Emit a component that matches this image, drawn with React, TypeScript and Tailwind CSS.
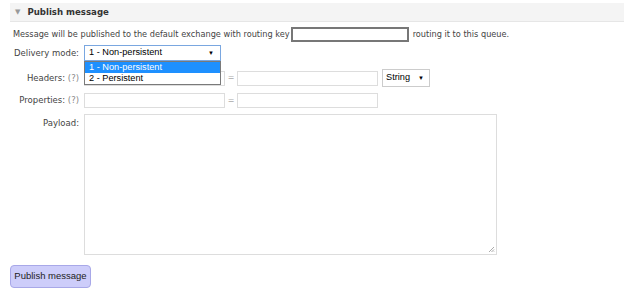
import React from "react";

const verdana = { fontFamily: '"DejaVu Sans", Verdana, sans-serif' };
const arial = { fontFamily: '"Liberation Sans", Arial, sans-serif' };

function Label({ children, help }: { children: React.ReactNode; help?: boolean }) {
  return (
    <div className="w-[69px] shrink-0 text-right text-[8.5px] text-[#444] whitespace-nowrap" style={verdana}>
      {children}
      {help && <span className="text-[#888]"> (?)</span>}
    </div>
  );
}

function TextBox({ w }: { w: number }) {
  return <div className="h-[15px] border border-[#ddd] bg-white shrink-0" style={{ width: w }} />;
}

export default function App() {
  return (
    <div className="w-[624px] h-[289px] bg-white overflow-hidden pl-[10px] pt-[3px]" style={verdana}>
      <div className="h-[19px] bg-[#f4f4f4] border-b border-[#e6e6e6] flex items-center pl-[5px]">
        <span className="text-[7px] text-[#999] leading-none">▼</span>
        <span className="ml-[7px] text-[8.6px] font-bold text-[#333] whitespace-nowrap">Publish message</span>
      </div>
      <div className="flex items-center mt-[5px] pl-[3px] text-[8.2px] text-[#444] h-[15px] whitespace-nowrap">
        <span>Message will be published to the default exchange with routing key</span>
        <div className="w-[118px] h-[15px] border-2 border-[#777] bg-white ml-[1px] mr-[4px] shrink-0" />
        <span>routing it to this queue.</span>
      </div>
      <div className="relative flex items-center mt-[3px] h-[16px]">
        <Label>Delivery mode:</Label>
        <div className="relative ml-[5px]">
          <div
            className="w-[137px] h-[16px] border border-[#7aa7e0] bg-white flex items-center justify-between pl-[4px] pr-[6px] text-[9.2px] text-black whitespace-nowrap"
            style={arial}
          >
            <span>1 - Non-persistent</span>
            <span className="text-[6px]">▼</span>
          </div>
          <div
            className="absolute left-0 top-[16px] z-10 w-[137px] border border-[#7a7a7a] bg-white text-[9.2px] text-black whitespace-nowrap"
            style={arial}
          >
            <div className="h-[11px] leading-[11px] bg-[#1e90ff] text-white pl-[4px]">1 - Non-persistent</div>
            <div className="h-[11px] leading-[11px] pl-[4px]">2 - Persistent</div>
          </div>
        </div>
      </div>
      <div className="flex items-center mt-[8px] h-[18px]">
        <Label help>Headers:</Label>
        <div className="ml-[5px] flex items-center">
          <TextBox w={141} />
          <span className="text-[8px] text-[#aaa] w-[12px] text-center">=</span>
          <TextBox w={141} />
          <div
            className="ml-[4px] w-[48px] h-[18px] border border-[#ccc] bg-white flex items-center justify-between pl-[3px] pr-[5px] text-[9.2px] text-black"
            style={arial}
          >
            <span>String</span>
            <span className="text-[6px]">▼</span>
          </div>
        </div>
      </div>
      <div className="flex items-center mt-[6px] h-[15px]">
        <Label help>Properties:</Label>
        <div className="ml-[5px] flex items-center">
          <TextBox w={141} />
          <span className="text-[8px] text-[#aaa] w-[12px] text-center">=</span>
          <TextBox w={141} />
        </div>
      </div>
      <div className="flex items-start mt-[6px]">
        <div className="pt-[3px]">
          <Label>Payload:</Label>
        </div>
        <div className="relative ml-[5px] w-[413px] h-[141px] border border-[#ddd] bg-white">
          <svg className="absolute right-[1px] bottom-[1px]" width="7" height="7" viewBox="0 0 7 7">
            <path d="M6 1 L1 6 M6 3.5 L3.5 6 M6 5.5 L5.5 6" stroke="#aaa" strokeWidth="1" />
          </svg>
        </div>
      </div>
      <div className="mt-[10px]">
        <button
          className="w-[81px] h-[23px] rounded-[4px] border border-[#a8a8e8] bg-[#cdcdfa] text-[9.5px] text-[#222] flex items-center justify-center whitespace-nowrap"
          style={arial}
        >
          Publish message
        </button>
      </div>
    </div>
  );
}
